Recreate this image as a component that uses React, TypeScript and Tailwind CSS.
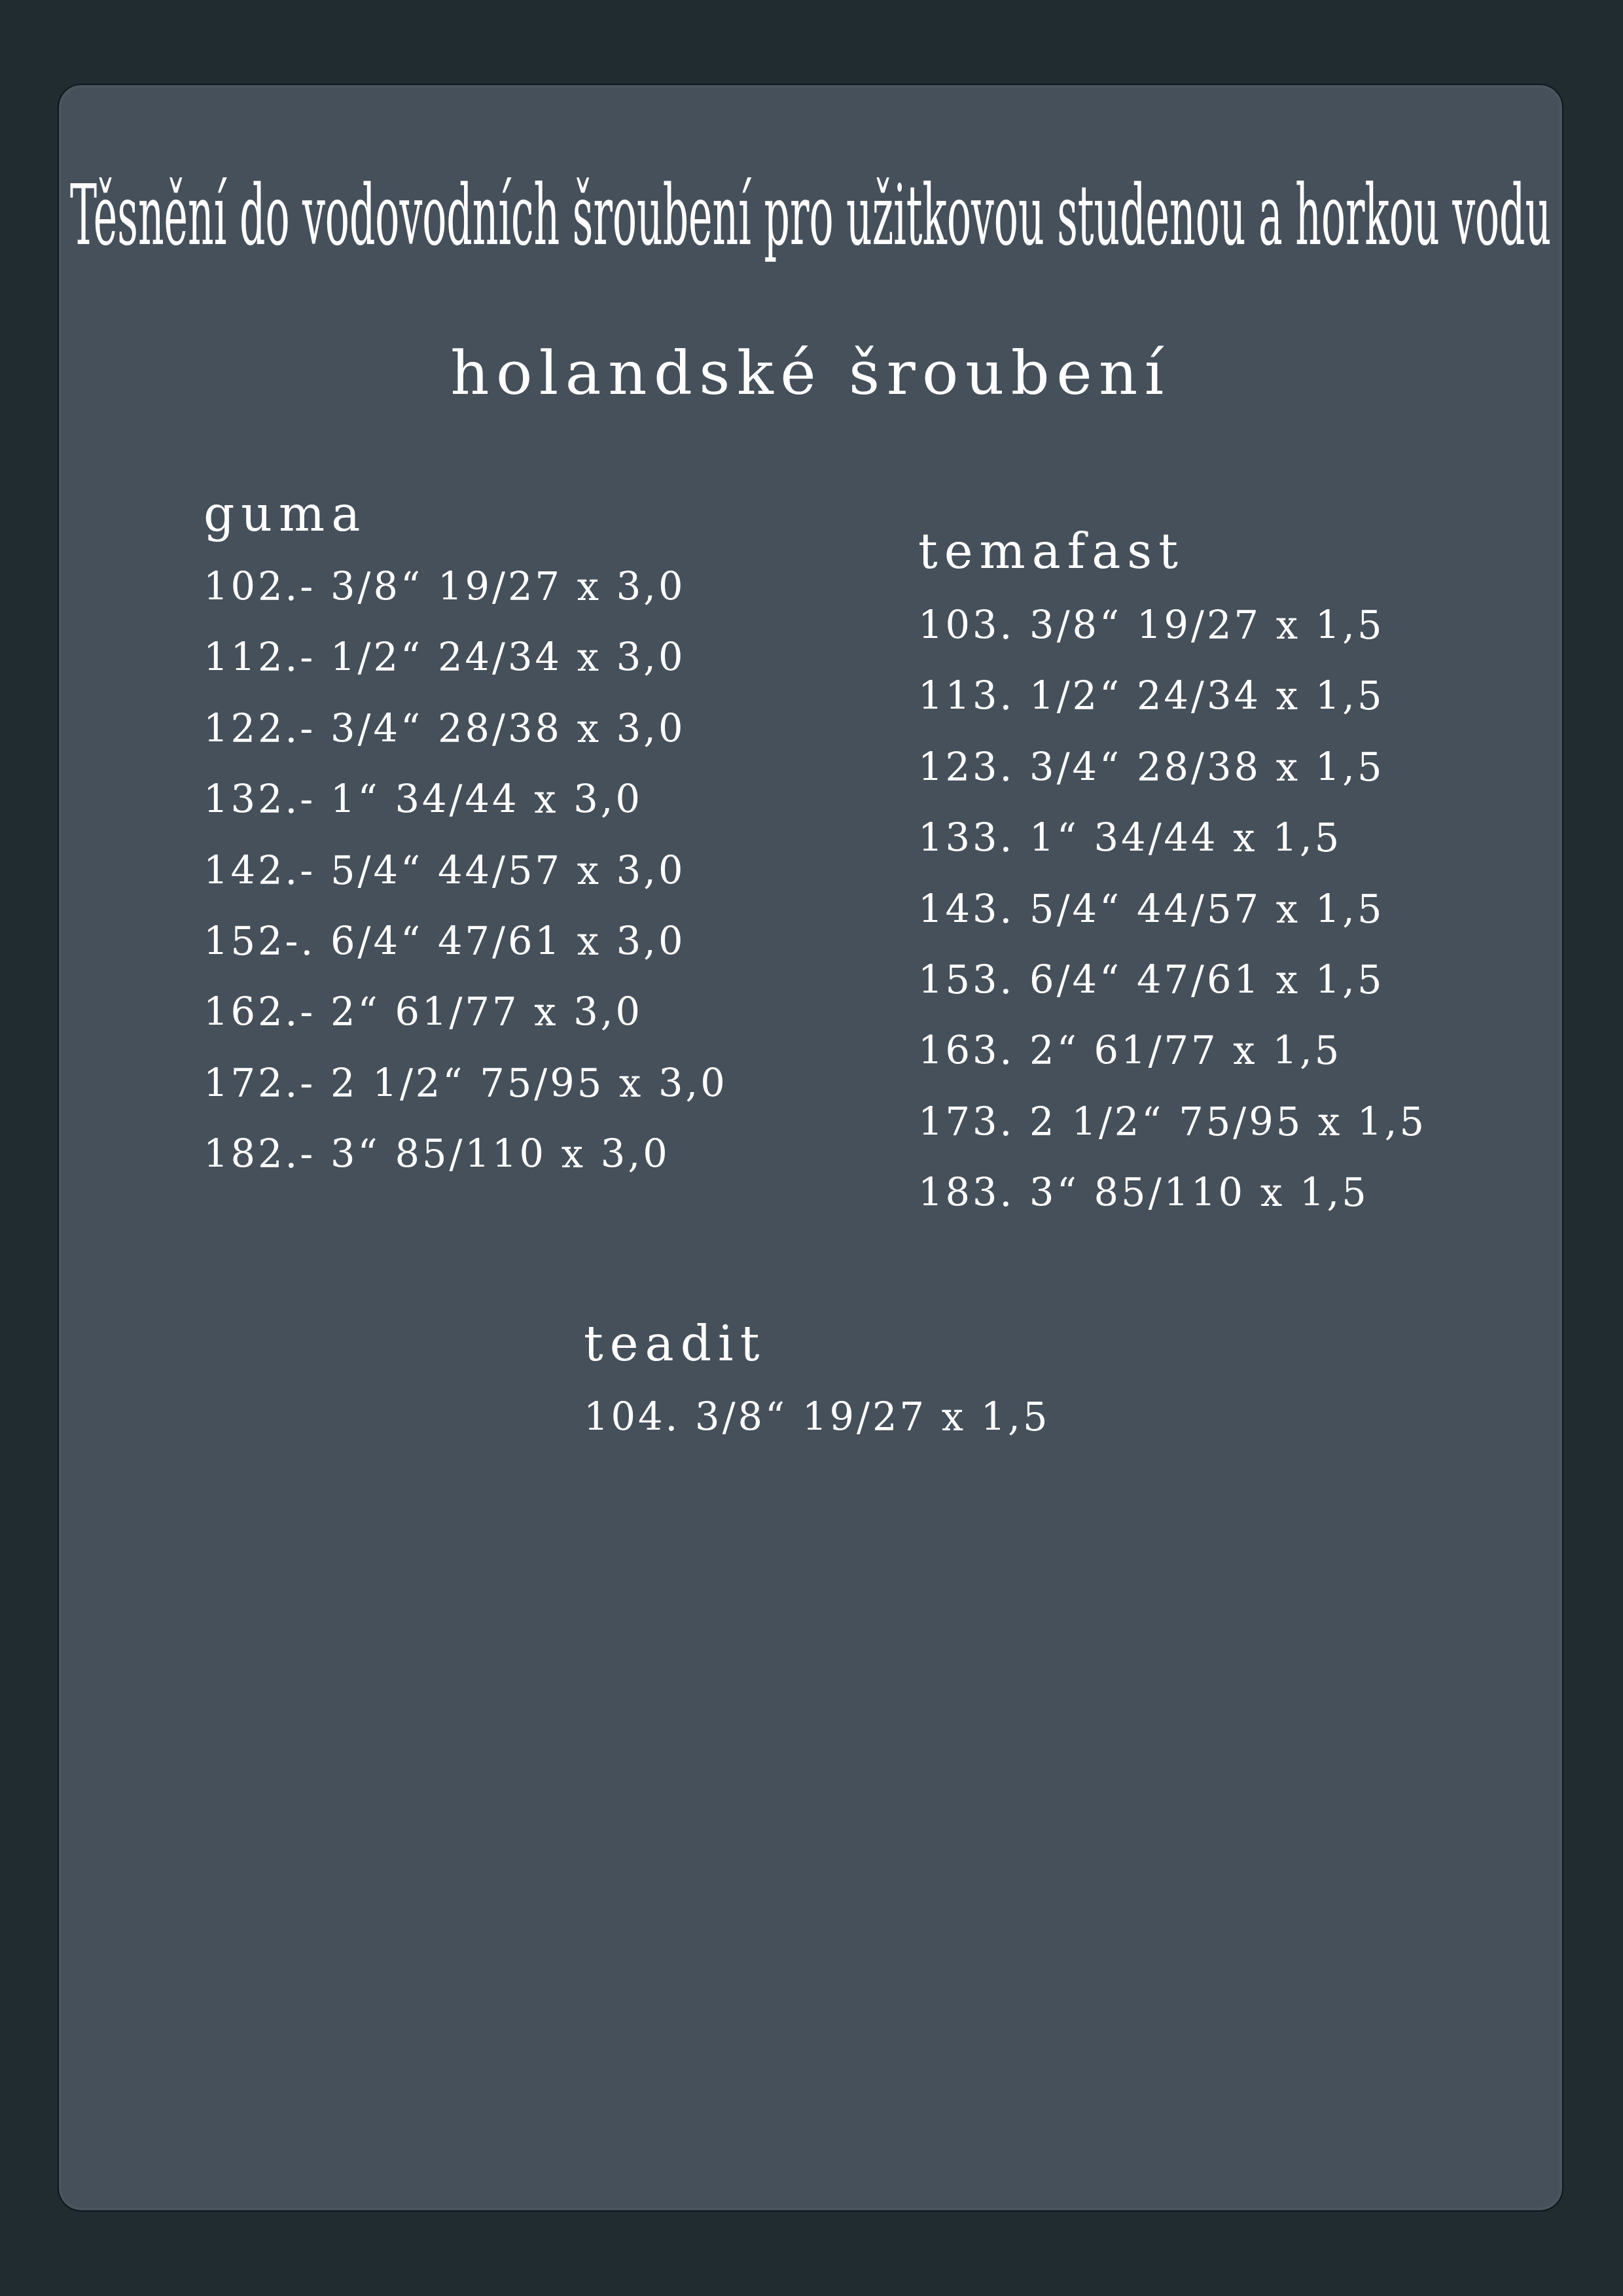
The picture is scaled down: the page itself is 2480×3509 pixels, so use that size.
import { useLayoutEffect, useRef, useState } from "react";

const guma = [
  "102.- 3/8“ 19/27 x 3,0",
  "112.- 1/2“ 24/34 x 3,0",
  "122.- 3/4“ 28/38 x 3,0",
  "132.- 1“ 34/44 x 3,0",
  "142.- 5/4“ 44/57 x 3,0",
  "152-. 6/4“ 47/61 x 3,0",
  "162.- 2“ 61/77 x 3,0",
  "172.- 2 1/2“ 75/95 x 3,0",
  "182.- 3“ 85/110 x 3,0",
];

const temafast = [
  "103. 3/8“ 19/27 x 1,5",
  "113. 1/2“ 24/34 x 1,5",
  "123. 3/4“ 28/38 x 1,5",
  "133. 1“ 34/44 x 1,5",
  "143. 5/4“ 44/57 x 1,5",
  "153. 6/4“ 47/61 x 1,5",
  "163. 2“ 61/77 x 1,5",
  "173. 2 1/2“ 75/95 x 1,5",
  "183. 3“ 85/110 x 1,5",
];

function Title() {
  const ref = useRef<HTMLSpanElement>(null);
  const [sx, setSx] = useState(0.5);
  useLayoutEffect(() => {
    if (ref.current) setSx(2263 / ref.current.offsetWidth);
  }, []);
  return (
    <div className="flex justify-center pt-[124px] h-[274px] overflow-visible">
      <span
        ref={ref}
        className="inline-block whitespace-nowrap text-[127px] leading-[150px] text-white origin-center font-stretch-condensed font-['DejaVu_Serif_Condensed','DejaVu_Serif',serif]"
        style={{ transform: `scaleX(${sx})` }}
      >
        Těsnění do vodovodních šroubení pro užitkovou studenou a horkou vodu
      </span>
    </div>
  );
}

function Group({ name, items, gap }: { name: string; items: string[]; gap: string }) {
  return (
    <div>
      <h3 className={`text-[74px] leading-[100px] tracking-[10px] text-white ${gap}`}>{name}</h3>
      {items.map((t) => (
        <p key={t} className="text-[59px] leading-[108.4px] tracking-[4px] text-white whitespace-nowrap">
          {t}
        </p>
      ))}
    </div>
  );
}

export default function App() {
  return (
    <div className="w-full h-[3509px] bg-[#212c31] pl-[88px] pt-[128px] font-['DejaVu_Serif',serif]">
      <div className="w-[2301px] h-[3252px] rounded-[36px] border-2 border-[#0e171b] bg-[#46505a] shadow-[inset_0_0_0_4px_#4a5560] overflow-hidden">
        <Title />
        <h2 className="mt-[112px] text-center text-[92px] leading-[110px] tracking-[10.5px] text-white">
          holandské šroubení
        </h2>
        <div className="mt-[109px] pl-[221px] grid grid-cols-[1092px_auto] items-start">
          <Group name="guma" items={guma} gap="mb-[8px]" />
          <div className="mt-[57px]">
            <Group name="temafast" items={temafast} gap="mb-[10px]" />
          </div>
        </div>
        <div className="mt-[125px] pl-[802px]">
          <Group name="teadit" items={["104. 3/8“ 19/27 x 1,5"]} gap="mb-[9px]" />
        </div>
      </div>
    </div>
  );
}
